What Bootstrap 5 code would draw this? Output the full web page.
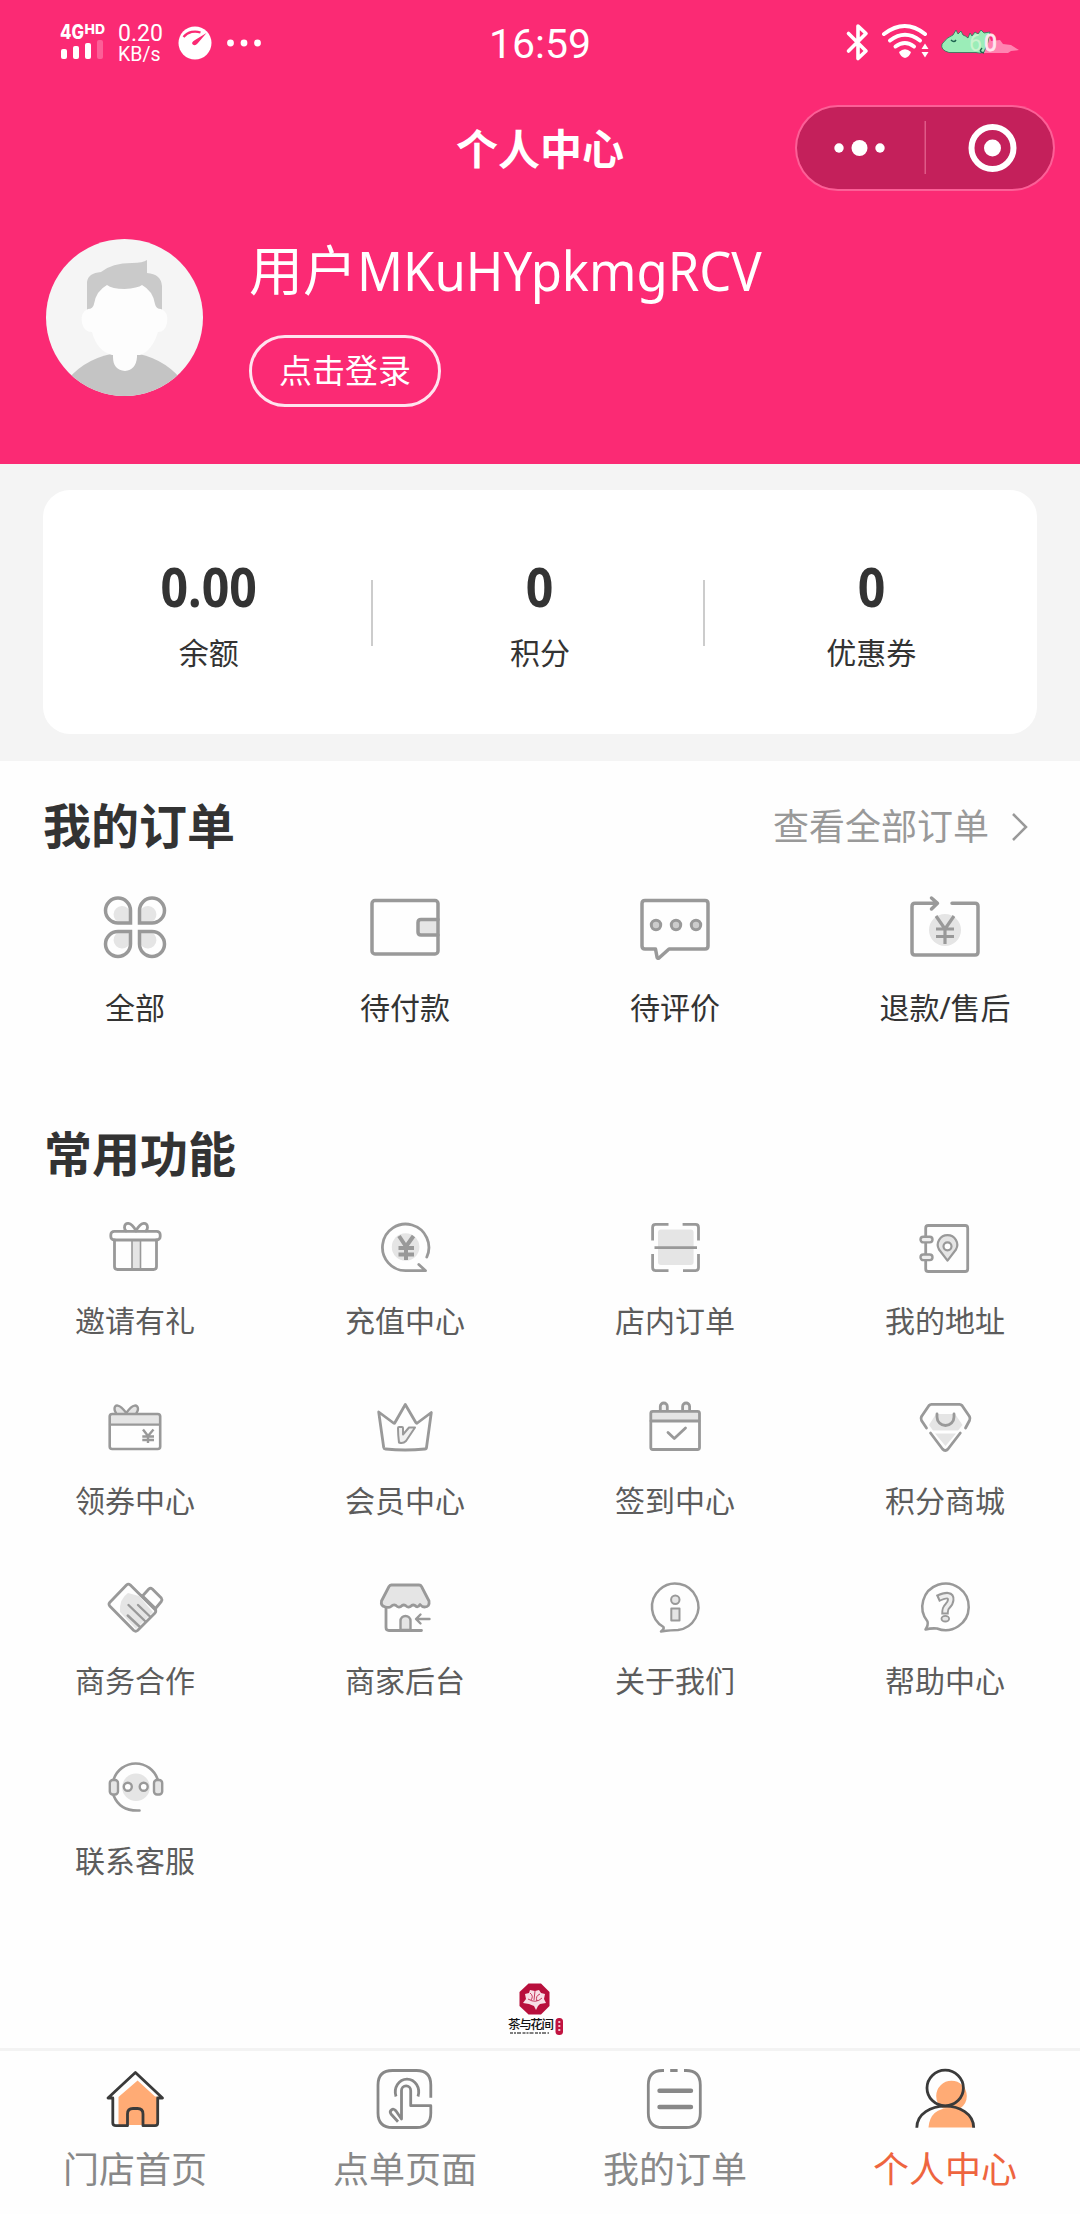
<!DOCTYPE html>
<html lang="zh-CN">
<head>
<meta charset="utf-8">
<meta name="viewport" content="width=device-width, initial-scale=1">
<title>个人中心</title>
<link href="https://cdn.jsdelivr.net/npm/bootstrap@5.3.0/dist/css/bootstrap.min.css" rel="stylesheet">
<style>
  body { font-family: "Noto Sans", "Noto Sans CJK SC", sans-serif; color: #333; background: #fefefe; }
  svg { display: block; flex: none; }
  .screen { width: 1080px; height: 2214px; overflow: hidden; }
  .hero { background: #fb2a74; height: 464px; }
  .statusbar { height: 85px; font-family: Roboto, sans-serif; padding: 0 60px; }
  .side-l { width: 400px; }
  .side-r { width: 400px; }
  .signal { width: 46px; margin-right: 12px; overflow: visible; }
  .speed { width: 50px; margin-right: 10px; }
  .speed-n { font-size: 23px; line-height: 23px; }
  .speed-u { font-size: 19.5px; line-height: 19px; }
  .clock { font-size: 41px; line-height: 44px; padding-top: 3px; }
  .titlebar { height: 128px; padding: 0 24.5px; }
  .titlebar-slot { width: 260px; }
  .page-title { font-size: 42px; line-height: 50px; font-weight: 700; }
  .capsule { width: 260px; height: 86px; margin-bottom: 2px; border: 2px solid rgba(255,255,255,.25); border-radius: 43px; background: #c4205b; background-clip: padding-box; }
  .profile { padding: 26px 46px 0; }
  .who { margin-left: 46px; }
  .nick { font-size: 54px; line-height: 62px; }
  .nick-id { display: inline-block; transform: scaleX(.94); transform-origin: left; }
  .login { width: 192px; height: 72px; border: 3px solid #ffe3ee; border-radius: 36px; font-size: 33px; line-height: 40px; margin-top: 34px; }
  .assets { background: #f4f4f4; height: 297px; padding: 26px 43px 27px; }
  .assets-box { border-radius: 27px; height: 244px; background: #fff; }
  .asset { padding-top: 65px; }
  .asset:not(:last-child) { background: linear-gradient(#ccc,#ccc) right 1px top 90px / 2px 66px no-repeat; }
  .asset-n { font-size: 53px; line-height: 64px; font-weight: 700; transform: scaleX(.91); }
  .asset-t { font-size: 30px; line-height: 40px; margin-top: 14px; }
  .sec-h { font-size: 48px; line-height: 60px; font-weight: 700; }
  .orders-head { padding: 35px 50px 0 43px; }
  .see-all { font-size: 36px; line-height: 58px; padding-top: 2px; color: #999; gap: 21px; }
  .orders { margin-top: 31.5px; }
  .cell-t { font-size: 30px; line-height: 40px; margin-top: 20px; }
  .funcs-head { padding: 96.5px 43px 0 44px; }
  .funcs { padding-top: 22.5px; row-gap: 46px; }
  .funcs .cell-t { color: #5c5c5c; margin-top: 14px; }
  .brand { padding: 99px 0 0 505px; }
  .tabs { height: 166px; border-top: 3px solid #f3f3f3; padding-top: 8px; background: #fefefe; }
  .tab-t { font-size: 36px; line-height: 44px; margin-top: 9px; color: #888; }
  .tab-t.on { color: #ee653f; }
  .ico { width: 80px; height: 80px; fill: none; stroke: #999; stroke-width: 2.8; stroke-linecap: round; stroke-linejoin: round; }
  .big { stroke-width: 3.5; }
  .ico.dim { stroke: #888; }
  .ico.dark { stroke: #3a3a3a; }
  .sh { fill: #e5e5e5; stroke: none; }
  .fl { fill: #e5e5e5; }
</style>
</head>
<body>
<div class="screen d-flex flex-column">

  <header class="hero text-white">
    <div class="statusbar d-flex align-items-center justify-content-between">
      <div class="side-l d-flex align-items-center">
        <svg class="signal" width="46" height="40" viewBox="0 0 46 40" fill="#fff">
          <text x="0" y="16" font-family="Inter, sans-serif" font-weight="800" font-size="19.5" textLength="24" lengthAdjust="spacingAndGlyphs">4G</text>
          <text x="24.5" y="11" font-family="Inter, sans-serif" font-weight="800" font-size="13.5" textLength="20.5" lengthAdjust="spacingAndGlyphs">HD</text>
          <rect x="1" y="26" width="6" height="10" rx="2"/><rect x="13" y="23" width="6" height="13" rx="2"/>
          <rect x="25" y="20" width="6" height="16" rx="2"/><rect x="37" y="17" width="6" height="19" rx="2" opacity=".25"/>
        </svg>
        <div class="speed"><div class="speed-n">0.20</div><div class="speed-u">KB/s</div></div>
        <svg width="34" height="34" viewBox="0 0 34 34"><circle cx="17" cy="17" r="16.5" fill="#fff"/><path d="M5.5 11C10 5.500 17 4.500 22.500 6.500" fill="none" stroke="#fb2a74" stroke-width="2.200"/><path d="M28.500 7L19.500 17.500Q17 20.500 14.800 18.500T17 14Z" fill="#fb2a74"/></svg>
        <svg width="60" height="10" viewBox="0 0 60 10" fill="#fff"><circle cx="18.500" cy="5" r="3.400"/><circle cx="32" cy="5" r="3.400"/><circle cx="45.500" cy="5" r="3.400"/></svg>
      </div>
      <div class="clock">16:59</div>
      <div class="side-r d-flex align-items-center justify-content-end">
        <svg width="176" height="44" viewBox="0 0 176 44">
          <path d="M4.500 12.500L22 30L14 37.500V5L22 12.500L4.500 30" fill="none" stroke="#fff" stroke-width="3.600" stroke-linejoin="round" stroke-linecap="round"/>
          <g fill="none" stroke="#fff" stroke-width="4" stroke-linecap="round"><path d="M40 13Q61 -3 81 13"/><path d="M46 19.500Q61 8 76 19.500"/><path d="M51.500 25.500Q61 18.500 70 25.500"/></g>
          <path d="M55 31Q61 25.500 67 31Q65.500 36 61 37Q56.500 36 55 31Z" fill="#fff"/>
          <path d="M77.500 28L81 22.500L84.500 28ZM77.500 31L81 36.500L84.500 31Z" fill="#fff"/>
          <path d="M139 11l6 3 2 6 9-1 3 4 8 1 8 5-8 1-3 2H138Z" fill="#ff84b1"/>
          <path d="M98 23Q103 16 109 14l3-5 2 4 3-3 2 4q3 1 5 3l2-5 2 3 3-4 3 2 3-4 3 3 6-1-2 10-4 10q-4 2-8 .500L105 31.500Q96 29 98 23Z" fill="#9bedb8" stroke="#2b7257" stroke-width=".8"/>
          <path d="M107 19q3 3 5 0M138 27q-4 4 2 5" fill="none" stroke="#1d6350" stroke-width="1.500"/>
          <g font-family="Roboto, sans-serif" font-size="23"><text x="125" y="29.500" fill="#c9f3cf">6</text><text x="140" y="29.500" fill="#ffe6ee" stroke="#ffe6ee" stroke-width=".8">0</text></g>
        </svg>
      </div>
    </div>

    <div class="titlebar d-flex align-items-center justify-content-between">
      <div class="titlebar-slot"></div>
      <div class="page-title">个人中心</div>
      <div class="capsule d-flex align-items-center">
        <svg width="256" height="82" viewBox="0 0 256 82" fill="#fff"><circle cx="42" cy="41" r="4.700"/><circle cx="62.500" cy="41" r="8"/><circle cx="83" cy="41" r="4.700"/><rect x="127.500" y="14" width="1.500" height="53" fill="#df5a88"/><circle cx="195.500" cy="41" r="8.500"/><circle cx="195.500" cy="41" r="21" fill="none" stroke="#fff" stroke-width="6"/></svg>
      </div>
    </div>

    <div class="profile d-flex">
      <svg width="157" height="157" viewBox="0 0 157 157">
        <defs><clipPath id="av"><circle cx="78.500" cy="78.500" r="78.500"/></clipPath></defs>
        <g clip-path="url(#av)">
          <rect width="157" height="157" fill="#f5f5f5"/>
          <path d="M18 157V145Q36 121 65 115H93Q121 121 139 145V157Z" fill="#c4c4c4"/>
          <path d="M67 104H91V118Q90 131 79 132Q67 131 67 118Z" fill="#fdfdfd"/>
          <path d="M41 71V43Q42 34 55 33Q66 24 86 24Q97 24 101 21V34Q115 35 116 47V71Z" fill="#cacaca"/>
          <path d="M42 70Q47 70 48 65Q50 52 61 46Q66 50 78.500 50Q92 49 96 46Q107 52 109 65Q110 70 115 70Q123 73 121 84Q119 93 112 93Q106 112 94 116H66Q51 112 46 93Q38 93 36 84Q34 73 42 70Z" fill="#fdfdfd"/>
        </g>
      </svg>
      <div class="who">
        <div class="nick text-nowrap">用户<span class="nick-id">MKuHYpkmgRCV</span></div>
        <button type="button" class="btn login text-white p-0 d-block">点击登录</button>
      </div>
    </div>
  </header>

  <section class="assets">
    <div class="assets-box d-flex text-center">
      <div class="asset col-4"><div class="asset-n">0.00</div><div class="asset-t">余额</div></div>
      <div class="asset col-4"><div class="asset-n">0</div><div class="asset-t">积分</div></div>
      <div class="asset col-4"><div class="asset-n">0</div><div class="asset-t">优惠券</div></div>
    </div>
  </section>

  <section>
    <div class="orders-head d-flex justify-content-between">
      <div class="sec-h">我的订单</div>
      <div class="see-all d-flex align-items-center">查看全部订单
        <svg width="20" height="32" viewBox="0 0 20 32" fill="none" stroke="#999" stroke-width="2.500"><path d="M3 3L16 16L3 29"/></svg>
      </div>
    </div>
    <div class="orders row g-0 text-center">
      <div class="col-3 d-flex flex-column align-items-center">
        <svg class="ico big" viewBox="0 0 80 80">
          <defs><g id="petal"><path class="sh" d="M-4.500-4.500H-14a8.500 8.500 0 1 1 9.500-9.500Z"/><path stroke-linejoin="miter" d="M-4.500-4.500H-17A12.500 12.500 0 1 1-4.500-17Z"/></g></defs>
          <use href="#petal" transform="translate(40 39.500)"/><use href="#petal" transform="translate(40 39.500) scale(-1 1)"/>
          <use href="#petal" transform="translate(40 39) scale(1 -1)"/><use href="#petal" transform="translate(40 39) scale(-1 -1)"/>
        </svg>
        <div class="cell-t">全部</div>
      </div>
      <div class="col-3 d-flex flex-column align-items-center">
        <svg class="ico big" viewBox="0 0 80 80"><path class="fl" d="M73 31.500H56q-3 0-3 3v9.500q0 3 3 3H73"/><rect x="7" y="12.500" width="66" height="53.500" rx="3"/></svg>
        <div class="cell-t">待付款</div>
      </div>
      <div class="col-3 d-flex flex-column align-items-center">
        <svg class="ico big" viewBox="0 0 80 80"><path d="M10 12.500H70q3 0 3 3V58q0 3-3 3H34L24 70q-1.500 1-2-1L20.500 61H10q-3 0-3-3V15.500q0-3 3-3Z"/><g fill="#ccc" stroke-width="3"><circle cx="21" cy="37" r="4.700"/><circle cx="41" cy="37" r="4.700"/><circle cx="61" cy="37" r="4.700"/></g></svg>
        <div class="cell-t">待评价</div>
      </div>
      <div class="col-3 d-flex flex-column align-items-center">
        <svg class="ico big" viewBox="0 0 80 80"><circle class="sh" cx="40" cy="42" r="16"/><path d="M47 15.200H70q3 0 3 3V64q0 3-3 3H10q-3 0-3-3V18.200q0-3 3-3H32M26.500 10L32.500 15.200L26.500 21"/><path stroke-width="3.200" stroke-linecap="butt" d="M31 28L40 41L49 28M40 41V56M31 41H49M31 48.500H49"/></svg>
        <div class="cell-t">退款/售后</div>
      </div>
    </div>
  </section>

  <section>
    <div class="funcs-head"><div class="sec-h">常用功能</div></div>
    <div class="funcs row gx-0 text-center">
      <div class="col-3 d-flex flex-column align-items-center">
        <svg class="ico" viewBox="0 0 80 80"><path d="M41 24C36 14 29.500 15 29.500 20.500q0 2 1.500 3.500M41 24C46 14 52.500 15 52.500 20.500q0 2-1.500 3.500"/><rect x="37" y="33" width="8.500" height="29.500" class="fl" stroke-width="1.600"/><rect x="15.800" y="24.300" width="49.400" height="8.700" rx="3.500"/><path d="M19.500 33V59.500q0 3 3 3H58.500q3 0 3-3V33"/></svg>
        <div class="cell-t">邀请有礼</div>
      </div>
      <div class="col-3 d-flex flex-column align-items-center">
        <svg class="ico" viewBox="0 0 80 80"><circle class="sh" cx="40.600" cy="40" r="13.800"/><path d="M61.800 50A23.200 23.300 0 1 0 41 63.700H60.600L53.800 57.500"/><path stroke-width="4" stroke-linecap="butt" d="M34 29L41 39.500L48.500 29M41 39V53M33.500 41H49M33.500 47.500H49"/></svg>
        <div class="cell-t">充值中心</div>
      </div>
      <div class="col-3 d-flex flex-column align-items-center">
        <svg class="ico" viewBox="0 0 80 80"><rect class="sh" x="23" y="22.500" width="35.600" height="35.500" rx="3"/><path stroke-linecap="butt" d="M33.500 17.400H20.600q-3 0-3 3V33.500M47.600 17.400H60.500q3 0 3 3V33.500M33.500 63.600H20.600q-3 0-3-3V47M48 63.600H60.500q3 0 3-3V47M19.500 40.700H62"/></svg>
        <div class="cell-t">店内订单</div>
      </div>
      <div class="col-3 d-flex flex-column align-items-center">
        <svg class="ico" viewBox="0 0 80 80"><rect x="20.700" y="18.500" width="42" height="46" rx="2.500"/><g fill="#eee" stroke-width="2.400"><rect x="15.500" y="29.800" width="12" height="5.600" rx="2.800"/><rect x="15.500" y="47.500" width="12" height="5.600" rx="2.800"/></g><path class="fl" stroke-width="2.200" d="M42.500 53.700L34 42.500A9.700 9.700 0 1 1 51 42.500Z"/><circle cx="42.500" cy="39.300" r="4" fill="#fff" stroke-width="2.200"/></svg>
        <div class="cell-t">我的地址</div>
      </div>

      <div class="col-3 d-flex flex-column align-items-center">
        <svg class="ico" viewBox="0 0 80 80"><path class="fl" stroke-width="2.400" d="M31.300 26C24 16 19.500 17.500 19.500 22q0 2 1.500 4M31.300 26C38 16 43 17.500 43 22q0 2-1.500 4"/><path class="sh" d="M15 27H65V37.500H15Z"/><rect x="14.700" y="27" width="50.500" height="35" rx="2.500" stroke-width="2.600"/><path stroke-width="2.200" d="M15 37.700H65"/><path stroke-width="2.400" stroke-linecap="butt" d="M48 42.500L53 49L58.500 42.500M53 49V56M47.300 49.500H59M47.300 53H59"/></svg>
        <div class="cell-t">领券中心</div>
      </div>
      <div class="col-3 d-flex flex-column align-items-center">
        <svg class="ico" viewBox="0 0 80 80"><path d="M13.700 25L28.500 36Q29.500 36.500 30 35.500L40.300 17.500L50.800 35.500Q51.500 36.500 52.300 36L66.300 25.500L61.500 60.500Q61.300 62 60 62Q40 64 20.500 62Q19 62 18.700 60.500Z"/><path stroke-width="2" fill="#f0f0f0" d="M34 40H37Q38 40 38 41V47.500L44 40.500H50L41 54Q38 57 34 55.500Q33 48 33 41Q33 40 34 40Z"/></svg>
        <div class="cell-t">会员中心</div>
      </div>
      <div class="col-3 d-flex flex-column align-items-center">
        <svg class="ico" viewBox="0 0 80 80"><path d="M25.300 24V19.500a3.500 3.500 0 0 1 7 0V24M47.600 24V19.500a3.500 3.500 0 0 1 7 0V24" fill="#f2f2f2"/><path class="sh" d="M16 25H64V33H16Z"/><rect x="15.800" y="24.300" width="48.700" height="38.200" rx="2"/><path d="M16 34H64"/><path d="M33 45.500L39.300 51.500L50.500 41"/></svg>
        <div class="cell-t">签到中心</div>
      </div>
      <div class="col-3 d-flex flex-column align-items-center">
        <svg class="ico" viewBox="0 0 80 80"><path class="sh" d="M31 27H50L57.500 38L53 43.500H28L24 38ZM30 46.500H51L40.500 59Z"/><path d="M21.500 41L16.500 33.500Q15.500 31.500 16.500 29.500L24 18.500Q25 17.300 26.500 17.300H54.500Q56 17.300 57 18.500L64.500 29.500Q65.500 31.500 64.500 33.500L60.500 41M25.500 46L37.500 62Q40.300 65 43 62L55.300 46"/><path d="M32 27v3a8.500 8.500 0 0 0 17 0v-3"/></svg>
        <div class="cell-t">积分商城</div>
      </div>

      <div class="col-3 d-flex flex-column align-items-center">
        <svg class="ico" viewBox="0 0 80 80"><path class="sh" d="M33 26Q24 32 25 45L41 62L58 45L44 29Z"/><path d="M14.700 35.500L31.500 18Q33.400 16.300 35.300 18L60 42.500Q61.500 44 60 46L42.500 63.500Q40.700 65 38.800 63.500L14.700 39Q13.300 37 14.700 35.500Z"/><path fill="#fefefe" d="M47.500 29L53.800 22Q55.500 20.500 57.300 22L66.300 31Q67.500 32.600 66.300 34.500L60.500 41.500Z"/><path stroke-width="2.400" d="M33.500 38L50.500 54.500M43 38L55.500 50M32.700 48.500L45 60M46 28L61 43"/></svg>
        <div class="cell-t">商务合作</div>
      </div>
      <div class="col-3 d-flex flex-column align-items-center">
        <svg class="ico" viewBox="0 0 80 80"><path d="M21 40V60.500q0 3 3 3H56.500"/><path class="fl" stroke-width="2.400" d="M35.500 63V54a5 5 0 0 1 10 0V63Z"/><path class="fl" d="M26.500 18H54Q55.800 18 56.500 19.500L64 34Q65 40 59.500 40Q57 40 55 37.500Q52.500 41.500 50 38.500Q47.500 37 45.500 39.500Q42.500 41 40.500 38.500Q38 37 36 39.500Q33 41 31 38.500Q28.500 37 26 39.500Q24 41 20.500 40Q15.500 39 16.500 34L24 19.500Q25 18 26.500 18Z"/><path stroke-width="2.400" d="M64.500 52H51.500M55.500 47.500L51 52L55.500 56.500"/></svg>
        <div class="cell-t">商家后台</div>
      </div>
      <div class="col-3 d-flex flex-column align-items-center">
        <svg class="ico" viewBox="0 0 80 80"><path stroke-width="2.500" d="M28.500 60A23.200 23.300 0 1 1 43 63Q37 63 26 64.500Q29.500 62 28.500 60Z"/><g class="fl" stroke-width="2"><circle cx="40.300" cy="32.700" r="4.200"/><rect x="36.300" y="41.500" width="8.200" height="12"/></g></svg>
        <div class="cell-t">关于我们</div>
      </div>
      <div class="col-3 d-flex flex-column align-items-center">
        <svg class="ico" viewBox="0 0 80 80"><path stroke-width="2.500" d="M22.500 54.500A23.200 23.300 0 1 1 32 61.500Q26 61 20.500 62.500Q23.500 58 22.500 54.500Z"/><path stroke-width="7.500" stroke-linecap="butt" d="M32.500 31.500Q46.500 25 45.700 33Q45.500 36 42.500 39Q39.800 41.500 40 47.500"/><path stroke="#eee" stroke-width="3.600" stroke-linecap="butt" d="M34.500 30.700Q46.500 26 45.700 33Q45.500 36 42.500 39Q39.800 41.500 40 45.500"/><ellipse cx="40.300" cy="51.700" rx="3.800" ry="2.800" class="fl" stroke-width="1.800"/></svg>
        <div class="cell-t">帮助中心</div>
      </div>

      <div class="col-3 d-flex flex-column align-items-center">
        <svg class="ico" viewBox="0 0 80 80"><circle class="sh" cx="41" cy="40.300" r="13.800"/><path stroke-width="2.600" d="M18.600 32.500A23.200 23.300 0 0 1 62.700 32.500M18.600 48.500Q25 64.500 44.500 63.500"/><g class="fl" stroke-width="2.400"><rect x="14.800" y="33" width="8.200" height="14.500" rx="3"/><rect x="59" y="33" width="8.200" height="14.500" rx="3"/></g><g fill="#fff" stroke-width="2.400"><circle cx="32.800" cy="39.700" r="4"/><circle cx="48.700" cy="39.700" r="4"/></g></svg>
        <div class="cell-t">联系客服</div>
      </div>
    </div>
  </section>

  <div class="brand">
    <svg width="60" height="56" viewBox="0 0 60 56">
      <path d="M23.500 3.500H36L44.500 12V26L36 34.500H23.500L14.500 26V12Z" fill="#b80f3c"/>
      <path d="M20 14l4-1 1-3 5 1 4-1 2 3 4 1-1 5 2 4-6 1-2 2-2 4-2-4-5-2-6-1 3-4Z" fill="#f8dfe6"/>
      <path d="M25 13q4 3 1 7M30 11l-1 9M35 14q-5 2-3 7M23 19q8 5 14-1" stroke="#b80f3c" stroke-width=".8" fill="none"/>
      <text x="3" y="49" font-family="'Noto Sans CJK SC', sans-serif" font-weight="500" font-size="12.500" fill="#111" textLength="46">茶与花间</text>
      <path d="M5 53H44" stroke="#555" stroke-width="1.600" stroke-dasharray="3 1 2 1 4 1.500"/>
      <rect x="50.500" y="38" width="7.500" height="17" rx="3.500" fill="#c11440"/>
      <path d="M54.300 41V52" stroke="#f3c3cf" stroke-width="2" stroke-dasharray="2 2"/>
    </svg>
  </div>

  <nav class="tabs mt-auto d-flex text-center">
    <div class="col-3 d-flex flex-column align-items-center">
      <svg class="ico dark" viewBox="0 0 80 80"><path fill="#ffab75" stroke="none" d="M42.600 21.500L60 37.500H62V66H23.500V38Z"/><path d="M17.800 39H13L40.400 13.500L67.500 39H62.700V64q0 2.700-2.700 2.700H48V55q0-5.500-5.500-5.500H38Q32.500 49.500 32.500 55V66.700H21Q17.800 66.700 17.800 64Z"/></svg>
      <div class="tab-t">门店首页</div>
    </div>
    <div class="col-3 d-flex flex-column align-items-center">
      <svg class="ico dim" viewBox="0 0 80 80"><path stroke-linecap="butt" d="M65.800 38.700V26Q65.800 11.500 51.500 11.500H27.500Q13 11.500 13 26V54Q13 68.500 27.500 68.500H51.500Q65.800 68.500 65.800 54V46.700H45.700V31.500a4.500 4.500 0 0 0-9.200 0V60L31 52Q28.500 49 26.500 51Q24.300 52.500 26 55L33 62.700M31 37.500A11.700 13 0 1 1 53 37.500"/></svg>
      <div class="tab-t">点单页面</div>
    </div>
    <div class="col-3 d-flex flex-column align-items-center">
      <svg class="ico dim" viewBox="0 0 80 80"><path stroke-linecap="butt" d="M29 11.500H27.500Q13.300 11.500 13.300 26V54Q13.300 68.500 27.500 68.500H51Q65.300 68.500 65.300 54V26Q65.300 11.500 51 11.500H49M35.200 11.500H42.600"/><path stroke-width="4.400" d="M24.500 31.700H56M24.500 48H56"/></svg>
      <div class="tab-t">我的订单</div>
    </div>
    <div class="col-3 d-flex flex-column align-items-center">
      <svg class="ico dark" viewBox="0 0 80 80"><g fill="#ffab75" stroke="none"><path d="M31.200 37A15.300 15.300 0 0 1 61.800 37Q61.800 45 55 49.500H38Q31.200 45 31.200 37Z"/><path d="M23.500 68.500Q25 49 46 49Q67 49 68 68.500Z"/></g><ellipse cx="40.200" cy="29" rx="18.200" ry="17.800"/><path stroke-linecap="butt" d="M11.800 68.700C12 40 68.500 40 68.700 68.700"/></svg>
      <div class="tab-t on">个人中心</div>
    </div>
  </nav>
</div>
<script src="https://cdn.jsdelivr.net/npm/bootstrap@5.3.0/dist/js/bootstrap.bundle.min.js"></script>
</body>
</html>
